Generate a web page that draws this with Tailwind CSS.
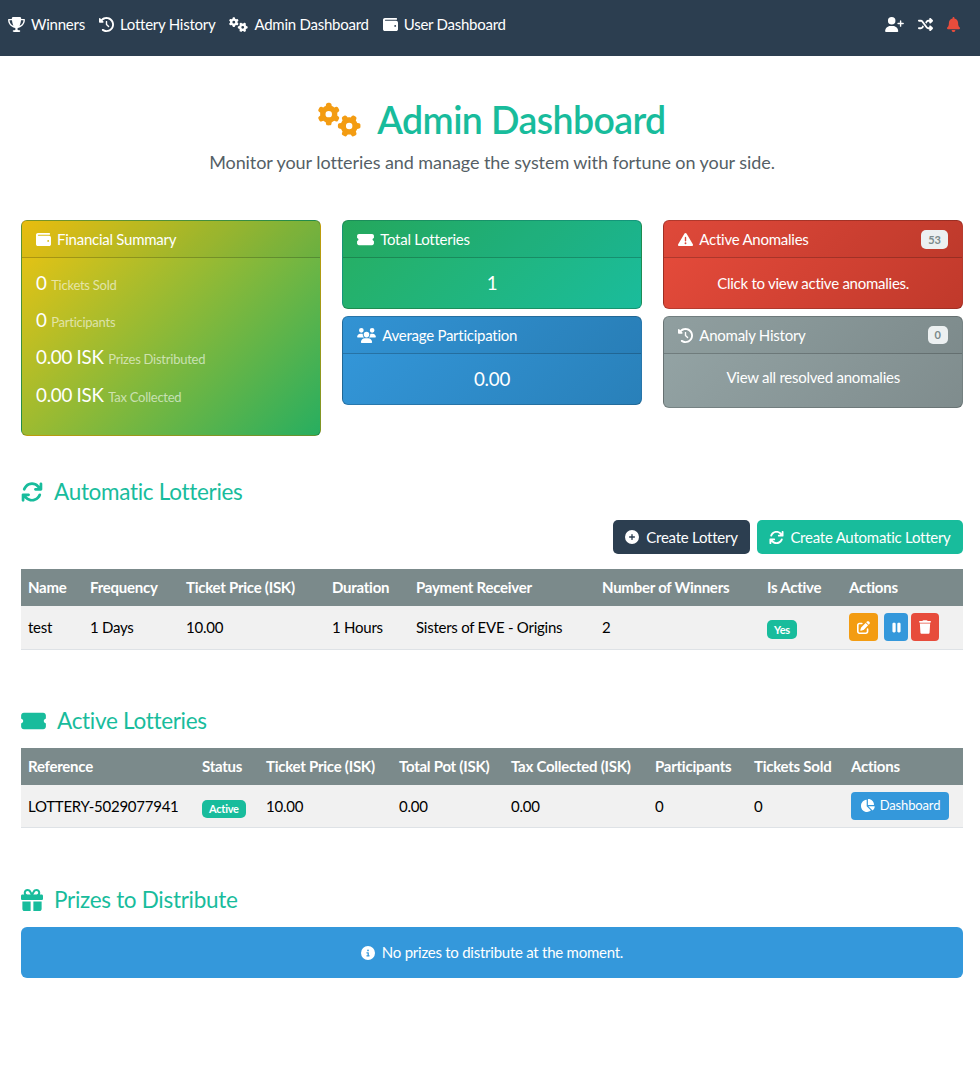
<!DOCTYPE html>
<html lang="en">
<head>
  <meta charset="UTF-8">
  <title>Admin Dashboard</title>
  <script src="https://cdn.jsdelivr.net/npm/@tailwindcss/browser@4"></script>
</head>
<body class="bg-white font-['Lato',sans-serif] text-[15px] tracking-[-0.25px] text-[#212529]">
  <!-- Icons -->
  <svg class="hidden">
    <symbol id="i-gears" viewBox="0 0 640 512"><path d="M308.5 135.3c7.1-6.3 9.9-16.2 6.2-25c-2.3-5.3-4.8-10.5-7.6-15.5L304 89.4c-3-5-6.3-9.9-9.8-14.6c-5.7-7.6-15.7-10.1-24.7-7.1l-28.2 9.3c-10.7-8.8-23-16-36.2-20.9L199 27.1c-1.9-9.3-9.1-16.7-18.5-17.8C173.9 8.4 167.2 8 160.4 8h-.7c-6.8 0-13.5 .4-20.1 1.2c-9.4 1.1-16.6 8.6-18.5 17.8L115 56.1c-13.3 5-25.5 12.1-36.2 20.9L50.5 67.8c-9-3-19-.5-24.7 7.1c-3.5 4.7-6.8 9.6-9.9 14.6l-3 5.3c-2.8 5-5.3 10.2-7.6 15.6c-3.7 8.7-.9 18.6 6.2 25l22.2 19.8C32.6 161.9 32 168.9 32 176s.6 14.1 1.7 20.9L11.5 216.7c-7.1 6.3-9.9 16.2-6.2 25c2.3 5.3 4.8 10.5 7.6 15.6l3 5.2c3 5.1 6.3 9.9 9.9 14.6c5.7 7.6 15.7 10.1 24.7 7.1l28.2-9.3c10.7 8.8 23 16 36.2 20.9l6.1 29.1c1.9 9.3 9.1 16.7 18.5 17.8c6.7 .8 13.5 1.2 20.4 1.2s13.7-.4 20.4-1.2c9.4-1.1 16.6-8.6 18.5-17.8l6.1-29.1c13.3-5 25.5-12.1 36.2-20.9l28.2 9.3c9 3 19 .5 24.7-7.1c3.5-4.7 6.8-9.5 9.8-14.6l3.1-5.4c2.8-5 5.3-10.2 7.6-15.5c3.7-8.7 .9-18.6-6.2-25l-22.2-19.8c1.1-6.8 1.7-13.8 1.7-20.9s-.6-14.1-1.7-20.9l22.2-19.8zM112 176a48 48 0 1 1 96 0 48 48 0 1 1 -96 0zM504.7 500.5c6.3 7.1 16.2 9.9 25 6.2c5.3-2.3 10.5-4.8 15.5-7.6l5.4-3.1c5-3 9.9-6.3 14.6-9.8c7.6-5.7 10.1-15.7 7.1-24.7l-9.3-28.2c8.8-10.7 16-23 20.9-36.2l29.1-6.1c9.3-1.9 16.7-9.1 17.8-18.5c.8-6.7 1.2-13.5 1.2-20.4s-.4-13.7-1.2-20.4c-1.1-9.4-8.6-16.6-17.8-18.5L583.9 307c-5-13.3-12.1-25.5-20.9-36.2l9.3-28.2c3-9 .5-19-7.1-24.7c-4.7-3.5-9.6-6.8-14.6-9.9l-5.3-3c-5-2.8-10.2-5.3-15.6-7.6c-8.7-3.7-18.6-.9-25 6.2l-19.8 22.2c-6.8-1.1-13.8-1.7-20.9-1.7s-14.1 .6-20.9 1.7l-19.8-22.2c-6.3-7.1-16.2-9.9-25-6.2c-5.3 2.3-10.5 4.8-15.6 7.6l-5.2 3c-5.1 3-9.9 6.3-14.6 9.9c-7.6 5.7-10.1 15.7-7.1 24.7l9.3 28.2c-8.8 10.7-16 23-20.9 36.2L315.1 313c-9.3 1.9-16.7 9.1-17.8 18.5c-.8 6.7-1.2 13.5-1.2 20.4s.4 13.7 1.2 20.4c1.1 9.4 8.6 16.6 17.8 18.5l29.1 6.1c5 13.3 12.1 25.5 20.9 36.2l-9.3 28.2c-3 9-.5 19 7.1 24.7c4.7 3.5 9.5 6.8 14.6 9.8l5.4 3.1c5 2.8 10.2 5.3 15.5 7.6c8.7 3.7 18.6 .9 25-6.2l19.8-22.2c6.8 1.1 13.8 1.7 20.9 1.7s14.1-.6 20.9-1.7l19.8 22.2zM464 304a48 48 0 1 1 0 96 48 48 0 1 1 0-96z"/></symbol>
    <symbol id="i-wallet" viewBox="0 0 512 512"><path d="M64 32C28.7 32 0 60.7 0 96V416c0 35.3 28.7 64 64 64H448c35.3 0 64-28.7 64-64V192c0-35.3-28.7-64-64-64H80c-8.8 0-16-7.2-16-16s7.2-16 16-16H448c17.7 0 32-14.3 32-32s-14.3-32-32-32H64zM416 272a32 32 0 1 1 0 64 32 32 0 1 1 0-64z"/></symbol>
    <symbol id="i-history" viewBox="0 0 512 512"><path d="M75 75L41 41C25.9 25.9 0 36.6 0 57.9V168c0 13.3 10.7 24 24 24H134.1c21.4 0 32.1-25.9 17-41l-30.8-30.8C155 85.5 203 64 256 64c106 0 192 86 192 192s-86 192-192 192c-40.8 0-78.6-12.7-109.7-34.4c-14.5-10.1-34.4-6.6-44.6 7.9s-6.6 34.4 7.9 44.6C151.2 495 201.7 512 256 512c141.4 0 256-114.6 256-256S397.4 0 256 0C185.3 0 121.3 28.7 75 75zm181 53c-13.3 0-24 10.7-24 24V256c0 6.4 2.5 12.5 7 17l72 72c9.4 9.4 24.6 9.4 33.9 0s9.4-24.6 0-33.9l-65-65V152c0-13.3-10.7-24-24-24z"/></symbol>
    <symbol id="i-ticket" viewBox="0 0 576 512"><path d="M0 128C0 92.7 28.7 64 64 64H512c35.3 0 64 28.7 64 64v64c0 8.8-7.4 15.7-15.7 18.6C541.5 217.1 528 235 528 256s13.5 38.9 32.3 45.4c8.3 2.9 15.7 9.8 15.7 18.6v64c0 35.3-28.7 64-64 64H64c-35.3 0-64-28.7-64-64V320c0-8.8 7.4-15.7 15.7-18.6C34.5 294.9 48 277 48 256s-13.5-38.9-32.3-45.4C7.4 207.7 0 200.8 0 192V128z"/></symbol>
    <symbol id="i-sync" viewBox="0 0 512 512"><path d="M105.1 202.6c7.7-21.8 20.2-42.3 37.8-59.8c62.5-62.5 163.8-62.5 226.3 0L386.3 160H336c-17.7 0-32 14.3-32 32s14.3 32 32 32H463.5c0 0 0 0 0 0h.4c17.7 0 32-14.3 32-32V64c0-17.7-14.3-32-32-32s-32 14.3-32 32v51.2L414.4 97.6c-87.5-87.5-229.3-87.5-316.8 0C73.2 122 55.6 150.7 44.8 181.4c-5.9 16.7 2.9 34.9 19.5 40.8s34.9-2.9 40.8-19.5zM39 289.3c-5 1.5-9.8 4.2-13.7 8.2c-4 4-6.7 8.8-8.1 14c-.3 1.2-.6 2.5-.8 3.8c-.3 1.7-.4 3.4-.4 5.1V448c0 17.7 14.3 32 32 32s32-14.3 32-32V396.9l17.6 17.5 0 0c87.5 87.4 229.3 87.4 316.7 0c24.4-24.4 42.1-53.1 52.9-83.7c5.9-16.7-2.9-34.9-19.5-40.8s-34.9 2.9-40.8 19.5c-7.7 21.8-20.2 42.3-37.8 59.8c-62.5 62.5-163.8 62.5-226.3 0l-.1-.1L125.6 352H176c17.7 0 32-14.3 32-32s-14.3-32-32-32H48.4c-1.6 0-3.2 .1-4.8 .3s-3.1 .5-4.6 1z"/></symbol>
  </svg>

  <!-- Navbar -->
  <nav class="h-14 bg-[#2c3e50] text-white flex justify-between items-start pt-[12px] pl-2 pr-5">
    <div class="flex items-center gap-[14px] leading-[24px]">
      <a class="flex items-center gap-[6px]"><svg class="w-[17px] h-[15px] fill-white" viewBox="0 0 576 512"><path d="M400 0H176c-26.5 0-48.1 21.8-47.1 48.2c.2 5.3 .4 10.6 .7 15.8H24C10.7 64 0 74.7 0 88c0 92.6 33.5 157 78.5 200.7c44.3 43.1 98.3 64.8 138.1 75.8c23.4 6.5 39.4 26 39.4 45.6c0 20.9-17 37.9-37.9 37.9H192c-17.7 0-32 14.3-32 32s14.3 32 32 32H384c17.7 0 32-14.3 32-32s-14.3-32-32-32H357.9C337 448 320 431 320 410.1c0-19.6 15.9-39.2 39.4-45.6c39.9-11 93.9-32.7 138.2-75.8C542.5 245 576 180.6 576 88c0-13.3-10.7-24-24-24H446.4c.3-5.2 .5-10.4 .7-15.8C448.1 21.8 426.5 0 400 0zM48.9 112h84.4c9.1 90.1 29.2 150.3 51.9 190.6c-24.9-11-50.8-26.5-73.2-48.3c-32-31.1-58-76-63-142.3zM464.1 254.3c-22.4 21.8-48.3 37.3-73.2 48.3c22.7-40.3 42.8-100.5 51.9-190.6h84.4c-5.1 66.3-31.1 111.2-63 142.3z"/></svg>Winners</a>
      <a class="flex items-center gap-[6px]"><svg class="w-[15px] h-[15px] fill-white"><use href="#i-history"/></svg>Lottery History</a>
      <a class="flex items-center gap-[6px]"><svg class="w-[19px] h-[15px] fill-white"><use href="#i-gears"/></svg>Admin Dashboard</a>
      <a class="flex items-center gap-[6px]"><svg class="w-[15px] h-[15px] fill-white"><use href="#i-wallet"/></svg>User Dashboard</a>
    </div>
    <div class="flex items-center gap-[14px] h-[24px]">
      <svg class="w-[19px] h-[15px] fill-white" viewBox="0 0 640 512"><path d="M96 128a128 128 0 1 1 256 0A128 128 0 1 1 96 128zM0 482.3C0 383.8 79.8 304 178.3 304h91.4C368.2 304 448 383.8 448 482.3c0 16.4-13.3 29.7-29.7 29.7H29.7C13.3 512 0 498.7 0 482.3zM504 312V248H440c-13.3 0-24-10.7-24-24s10.7-24 24-24h64V136c0-13.3 10.7-24 24-24s24 10.7 24 24v64h64c13.3 0 24 10.7 24 24s-10.7 24-24 24H552v64c0 13.3-10.7 24-24 24s-24-10.7-24-24z"/></svg>
      <svg class="w-[15px] h-[15px] fill-white" viewBox="0 0 512 512"><path d="M403.8 34.4c12-5 25.7-2.2 34.9 6.9l64 64c6 6 9.4 14.1 9.4 22.6s-3.4 16.6-9.4 22.6l-64 64c-9.2 9.2-22.9 11.9-34.9 6.9s-19.8-16.6-19.8-29.6V160H352c-10.1 0-19.6 4.7-25.6 12.8L284 229.3 244 176l31.2-41.6C293.3 110.2 321.8 96 352 96h32V64c0-12.9 7.8-24.6 19.8-29.6zM164 282.7L204 336l-31.2 41.6C154.7 401.8 126.2 416 96 416H32c-17.7 0-32-14.3-32-32s14.3-32 32-32H96c10.1 0 19.6-4.7 25.6-12.8L164 282.7zm274.6 188c-9.2 9.2-22.9 11.9-34.9 6.9s-19.8-16.6-19.8-29.6V416H352c-30.2 0-58.7-14.2-76.8-38.4L121.6 172.8c-6-8.1-15.5-12.8-25.6-12.8H32c-17.7 0-32-14.3-32-32s14.3-32 32-32H96c30.2 0 58.7 14.2 76.8 38.4L326.4 339.2c6 8.1 15.5 12.8 25.6 12.8h32V320c0-12.9 7.8-24.6 19.8-29.6s25.7-2.2 34.9 6.9l64 64c6 6 9.4 14.1 9.4 22.6s-3.4 16.6-9.4 22.6l-64 64z"/></svg>
      <svg class="w-[13px] h-[15px] fill-[#e74c3c]" viewBox="0 0 448 512"><path d="M224 0c-17.7 0-32 14.3-32 32V51.2C119 66 64 130.6 64 208v18.8c0 47-17.3 92.4-48.5 127.6l-7.4 8.3c-8.4 9.4-10.4 22.9-5.3 34.4S19.4 416 32 416H416c12.6 0 24-7.4 29.2-18.9s3.1-25-5.3-34.4l-7.4-8.3C401.3 319.2 384 273.9 384 226.8V208c0-77.4-55-142-128-156.8V32c0-17.7-14.3-32-32-32zm45.3 493.3c12-12 18.7-28.3 18.7-45.3H224 160c0 17 6.7 33.3 18.7 45.3s28.3 18.7 45.3 18.7s33.3-6.7 45.3-18.7z"/></svg>
    </div>
  </nav>

  <main class="pl-[21px] pr-[17px]">
    <!-- Title -->
    <header class="pt-[39px] text-center">
      <h1 class="flex items-center justify-center gap-4 text-[37.5px] leading-[50px] font-semibold tracking-[-0.6px] text-[#18bc9c]"><svg class="w-[43px] h-[35px] -translate-y-px fill-[#f39c12]"><use href="#i-gears"/></svg>Admin Dashboard</h1>
      <p class="mt-[3px] text-[18px] leading-[28px] tracking-[-0.07px] text-[#555f66]">Monitor your lotteries and manage the system with fortune on your side.</p>
    </header>

    <!-- Cards -->
    <section class="mt-[44px] grid grid-cols-3 gap-x-[21.5px] items-start text-white">
      <div class="h-[216px] rounded-md border border-black/20 bg-linear-[135deg,#f1c40f,#27ae60]">
        <div class="h-[37px] px-[14px] flex items-center gap-[6px] border-b border-black/20 bg-black/[.03]"><svg class="w-[15px] h-[15px] fill-white"><use href="#i-wallet"/></svg>Financial Summary</div>
        <div class="pt-[14px] px-[14px]">
          <p class="h-[37px] leading-[22px] text-[18.75px]">0 <span class="text-[13px] text-white/60">Tickets Sold</span></p>
          <p class="h-[37px] leading-[22px] text-[18.75px]">0 <span class="text-[13px] text-white/60">Participants</span></p>
          <p class="h-[37.5px] leading-[22px] text-[18.75px]">0.00 ISK <span class="text-[13px] text-white/60">Prizes Distributed</span></p>
          <p class="leading-[22px] text-[18.75px]">0.00 ISK <span class="text-[13px] text-white/60">Tax Collected</span></p>
        </div>
      </div>

      <div class="flex flex-col gap-[7px]">
        <div class="h-[89px] rounded-md border border-black/20 bg-linear-[135deg,#27ae60,#1abc9c]">
          <div class="h-[37px] px-[14px] flex items-center gap-[6px] border-b border-black/20 bg-black/[.03]"><svg class="w-[17px] h-[15px] fill-white"><use href="#i-ticket"/></svg>Total Lotteries</div>
          <p class="text-center text-[18.75px] leading-[50px]">1</p>
        </div>
        <div class="h-[89px] rounded-md border border-black/20 bg-linear-[135deg,#3498db,#2980b9]">
          <div class="h-[37px] px-[14px] flex items-center gap-[6px] border-b border-black/20 bg-black/[.03]"><svg class="w-[19px] h-[15px] fill-white" viewBox="0 0 640 512"><path d="M144 0a80 80 0 1 1 0 160A80 80 0 1 1 144 0zM512 0a80 80 0 1 1 0 160A80 80 0 1 1 512 0zM0 298.7C0 239.8 47.8 192 106.7 192h42.7c15.9 0 31 3.5 44.6 9.7c-1.3 7.2-1.9 14.7-1.9 22.3c0 38.2 16.8 72.5 43.3 96c-.2 0-.4 0-.7 0H21.3C9.6 320 0 310.4 0 298.7zM405.3 320c-.2 0-.4 0-.7 0c26.6-23.5 43.3-57.8 43.3-96c0-7.6-.7-15-1.9-22.3c13.6-6.3 28.7-9.7 44.6-9.7h42.7C592.2 192 640 239.8 640 298.7c0 11.8-9.6 21.3-21.3 21.3H405.3zM224 224a96 96 0 1 1 192 0 96 96 0 1 1 -192 0zM128 485.3C128 411.7 187.7 352 261.3 352H378.7C452.3 352 512 411.7 512 485.3c0 14.7-11.9 26.7-26.7 26.7H154.7c-14.7 0-26.7-11.9-26.7-26.7z"/></svg>Average Participation</div>
          <p class="text-center text-[18.75px] leading-[50px]">0.00</p>
        </div>
      </div>

      <div class="flex flex-col gap-[7px]">
        <div class="h-[89px] rounded-md border border-black/20 bg-linear-[135deg,#e74c3c,#c0392b]">
          <div class="h-[37px] px-[14px] flex items-center justify-between border-b border-black/20 bg-black/[.03]">
            <span class="flex items-center gap-[6px]"><svg class="w-[15px] h-[15px] fill-white" viewBox="0 0 512 512"><path d="M256 32c14.2 0 27.3 7.5 34.5 19.8l216 368c7.3 12.4 7.3 27.7 .2 40.1S486.3 480 472 480H40c-14.3 0-27.6-7.7-34.7-20.1s-7-27.8 .2-40.1l216-368C228.7 39.5 241.8 32 256 32zm0 128c-13.3 0-24 10.7-24 24V296c0 13.3 10.7 24 24 24s24-10.7 24-24V184c0-13.3-10.7-24-24-24zm32 224a32 32 0 1 0 -64 0 32 32 0 1 0 64 0z"/></svg>Active Anomalies</span>
            <span class="rounded-[5px] bg-[#ecf0f1] px-[7px] text-[11px] leading-[19px] font-bold tracking-normal text-[#7b8a8b]">53</span>
          </div>
          <p class="text-center leading-[50px]">Click to view active anomalies.</p>
        </div>
        <div class="h-[92px] rounded-md border border-black/20 bg-linear-[135deg,#95a5a6,#7f8c8d]">
          <div class="h-[37px] px-[14px] flex items-center justify-between border-b border-black/20 bg-black/[.03]">
            <span class="flex items-center gap-[6px]"><svg class="w-[15px] h-[15px] fill-white"><use href="#i-history"/></svg>Anomaly History</span>
            <span class="rounded-[5px] bg-[#ecf0f1] px-[7px] text-[11px] leading-[18px] font-bold tracking-normal text-[#7b8a8b]">0</span>
          </div>
          <p class="text-center leading-[46px]">View all resolved anomalies</p>
        </div>
      </div>
    </section>

    <!-- Automatic Lotteries -->
    <h3 class="mt-[41px] flex items-center gap-[11px] text-[22.5px] leading-[30px] tracking-[-0.3px] text-[#18bc9c]"><svg class="w-[22px] h-[22px] fill-[#18bc9c]"><use href="#i-sync"/></svg>Automatic Lotteries</h3>
    <div class="mt-[13px] flex justify-end gap-[7px] text-white">
      <a class="h-[34px] w-[137px] rounded-[5px] bg-[#2c3e50] flex items-center justify-center gap-[7px]"><svg class="w-[14px] h-[14px] fill-white" viewBox="0 0 512 512"><path d="M256 512A256 256 0 1 0 256 0a256 256 0 1 0 0 512zM232 344V280H168c-13.3 0-24-10.7-24-24s10.7-24 24-24h64V168c0-13.3 10.7-24 24-24s24 10.7 24 24v64h64c13.3 0 24 10.7 24 24s-10.7 24-24 24H280v64c0 13.3-10.7 24-24 24s-24-10.7-24-24z"/></svg>Create Lottery</a>
      <a class="h-[34px] w-[206px] rounded-[5px] bg-[#18bc9c] flex items-center justify-center gap-[6px]"><svg class="w-[15px] h-[15px] fill-white"><use href="#i-sync"/></svg>Create Automatic Lottery</a>
    </div>
    <table class="mt-[15px] w-full table-fixed border-collapse">
      <thead class="bg-[#7b8a8b] text-white text-left">
        <tr class="h-[37px]">
          <th class="w-[61px] pl-[7px] font-bold">Name</th>
          <th class="w-[96px] pl-[8px] font-bold">Frequency</th>
          <th class="w-[146px] pl-[8px] font-bold">Ticket Price (ISK)</th>
          <th class="w-[84px] pl-[8px] font-bold">Duration</th>
          <th class="w-[186px] pl-[8px] font-bold">Payment Receiver</th>
          <th class="w-[165px] pl-[8px] font-bold">Number of Winners</th>
          <th class="w-[82px] pl-[8px] font-bold">Is Active</th>
          <th class="pl-[8px] font-bold">Actions</th>
        </tr>
      </thead>
      <tbody>
        <tr class="h-[43px] bg-[#f1f1f1] border-b border-[#dee2e6] text-black">
          <td class="pl-[7px]">test</td>
          <td class="pl-[8px]">1 Days</td>
          <td class="pl-[8px]">10.00</td>
          <td class="pl-[8px]">1 Hours</td>
          <td class="pl-[8px]">Sisters of EVE - Origins</td>
          <td class="pl-[8px]">2</td>
          <td class="pl-[8px]"><span class="inline-block rounded-[5px] bg-[#18bc9c] px-[7px] text-[11px] leading-[19px] font-bold text-white translate-y-[1px]">Yes</span></td>
          <td class="pl-[8px]">
            <div class="flex">
              <a class="mr-[6px] w-[29px] h-[28px] rounded bg-[#f39c12] flex items-center justify-center"><svg class="w-[13px] h-[13px] fill-white" viewBox="0 0 512 512"><path d="M471.6 21.7c-21.9-21.9-57.3-21.9-79.2 0L362.3 51.7l97.9 97.9 30.1-30.1c21.9-21.9 21.9-57.3 0-79.2L471.6 21.7zm-299.2 220c-6.1 6.1-10.8 13.6-13.5 21.9l-29.6 88.8c-2.9 8.6-.6 18.1 5.8 24.6s15.9 8.7 24.6 5.8l88.8-29.6c8.2-2.7 15.7-7.4 21.9-13.5L437.7 172.3 339.7 74.3 172.4 241.7zM96 64C43 64 0 107 0 160V416c0 53 43 96 96 96H352c53 0 96-43 96-96V320c0-17.7-14.3-32-32-32s-32 14.3-32 32v96c0 17.7-14.3 32-32 32H96c-17.7 0-32-14.3-32-32V160c0-17.7 14.3-32 32-32h96c17.7 0 32-14.3 32-32s-14.3-32-32-32H96z"/></svg></a>
              <a class="mr-[3px] w-[24px] h-[28px] rounded bg-[#3498db] flex items-center justify-center"><svg class="w-[9px] h-[13px] fill-white" viewBox="0 0 320 512"><path d="M48 64C21.5 64 0 85.5 0 112V400c0 26.5 21.5 48 48 48H80c26.5 0 48-21.5 48-48V112c0-26.5-21.5-48-48-48H48zm192 0c-26.5 0-48 21.5-48 48V400c0 26.5 21.5 48 48 48h32c26.5 0 48-21.5 48-48V112c0-26.5-21.5-48-48-48H240z"/></svg></a>
              <a class="w-[28px] h-[28px] rounded bg-[#e74c3c] flex items-center justify-center"><svg class="w-[12px] h-[14px] fill-white" viewBox="0 0 448 512"><path d="M135.2 17.7L128 32H32C14.3 32 0 46.3 0 64S14.3 96 32 96H416c17.7 0 32-14.3 32-32s-14.3-32-32-32H320l-7.2-14.3C307.4 6.8 296.3 0 284.2 0H163.8c-12.1 0-23.2 6.8-28.6 17.7zM416 128H32L53.2 467c1.6 25.3 22.6 45 47.9 45H346.9c25.3 0 46.3-19.7 47.9-45L416 128z"/></svg></a>
            </div>
          </td>
        </tr>
      </tbody>
    </table>

    <!-- Active Lotteries -->
    <h3 class="mt-[56px] flex items-center gap-[11px] text-[22.5px] leading-[30px] tracking-[-0.3px] text-[#18bc9c]"><svg class="w-[25px] h-[22px] fill-[#18bc9c]"><use href="#i-ticket"/></svg>Active Lotteries</h3>
    <table class="mt-[12px] w-full table-fixed border-collapse">
      <thead class="bg-[#7b8a8b] text-white text-left">
        <tr class="h-[37px]">
          <th class="w-[173px] pl-[7px] font-bold">Reference</th>
          <th class="w-[64px] pl-[8px] font-bold">Status</th>
          <th class="w-[133px] pl-[8px] font-bold">Ticket Price (ISK)</th>
          <th class="w-[112px] pl-[8px] font-bold">Total Pot (ISK)</th>
          <th class="w-[144px] pl-[8px] font-bold">Tax Collected (ISK)</th>
          <th class="w-[99px] pl-[8px] font-bold">Participants</th>
          <th class="w-[97px] pl-[8px] font-bold">Tickets Sold</th>
          <th class="pl-[8px] font-bold">Actions</th>
        </tr>
      </thead>
      <tbody>
        <tr class="h-[43px] bg-[#f1f1f1] border-b border-[#dee2e6] text-black">
          <td class="pl-[7px]">LOTTERY-5029077941</td>
          <td class="pl-[8px]"><span class="inline-block rounded-[5px] bg-[#18bc9c] px-[7px] text-[11px] leading-[18px] font-bold text-white translate-y-[1px]">Active</span></td>
          <td class="pl-[8px]">10.00</td>
          <td class="pl-[8px]">0.00</td>
          <td class="pl-[8px]">0.00</td>
          <td class="pl-[8px]">0</td>
          <td class="pl-[8px]">0</td>
          <td class="pl-[8px]"><a class="w-[98px] h-[28px] rounded bg-[#3498db] text-[13px] tracking-[-0.15px] text-white flex items-center justify-center gap-[5px]"><svg class="w-[15px] h-[13px] fill-white" viewBox="0 0 576 512"><path d="M304 240V16.6c0-9 7-16.6 16-16.6C443.7 0 544 100.3 544 224c0 9-7.6 16-16.6 16H304zM32 272C32 150.7 122.1 50.3 239 34.3c9.2-1.3 17 6.1 17 15.4V288L412.5 444.5c6.7 6.7 6.2 17.7-1.5 23.1C371.8 495.6 323.8 512 272 512C139.5 512 32 404.6 32 272zm526.4 16c9.3 0 16.6 7.8 15.4 17c-7.7 55.9-34.6 105.6-73.9 142.3c-6 5.6-15.4 5.2-21.2-.7L320 288H558.4z"/></svg>Dashboard</a></td>
        </tr>
      </tbody>
    </table>

    <!-- Prizes -->
    <h3 class="mt-[57px] flex items-center gap-[11px] text-[22.5px] leading-[30px] tracking-[-0.3px] text-[#18bc9c]"><svg class="w-[22px] h-[22px] fill-[#18bc9c]" viewBox="0 0 512 512"><path d="M190.5 68.8L225.3 128H224 152c-22.1 0-40-17.9-40-40s17.9-40 40-40h2.2c14.9 0 28.8 7.9 36.3 20.8zM64 88c0 14.4 3.5 28 9.6 40H32c-17.7 0-32 14.3-32 32v64c0 17.7 14.3 32 32 32H480c17.7 0 32-14.3 32-32V160c0-17.7-14.3-32-32-32H438.4c6.1-12 9.6-25.6 9.6-40c0-48.6-39.4-88-88-88h-2.2c-31.9 0-61.5 16.9-77.7 44.4L256 85.5l-24.1-41C215.7 16.9 186.1 0 154.2 0H152C103.4 0 64 39.4 64 88zm336 0c0 22.1-17.9 40-40 40H288h-1.3l34.8-59.2C329.1 55.9 342.9 48 357.8 48H360c22.1 0 40 17.9 40 40zM32 288V464c0 26.5 21.5 48 48 48H224V288H32zM288 512H432c26.5 0 48-21.5 48-48V288H288V512z"/></svg>Prizes to Distribute</h3>
    <div class="mt-[12px] h-[51px] rounded-md bg-[#3498db] text-white flex items-center justify-center gap-[7px]"><svg class="w-[14px] h-[14px] fill-white" viewBox="0 0 512 512"><path d="M256 512A256 256 0 1 0 256 0a256 256 0 1 0 0 512zM216 336h24V272H216c-13.3 0-24-10.7-24-24s10.7-24 24-24h48c13.3 0 24 10.7 24 24v88h8c13.3 0 24 10.7 24 24s-10.7 24-24 24H216c-13.3 0-24-10.7-24-24s10.7-24 24-24zm40-208a32 32 0 1 1 0 64 32 32 0 1 1 0-64z"/></svg>No prizes to distribute at the moment.</div>
  </main>
</body>
</html>
